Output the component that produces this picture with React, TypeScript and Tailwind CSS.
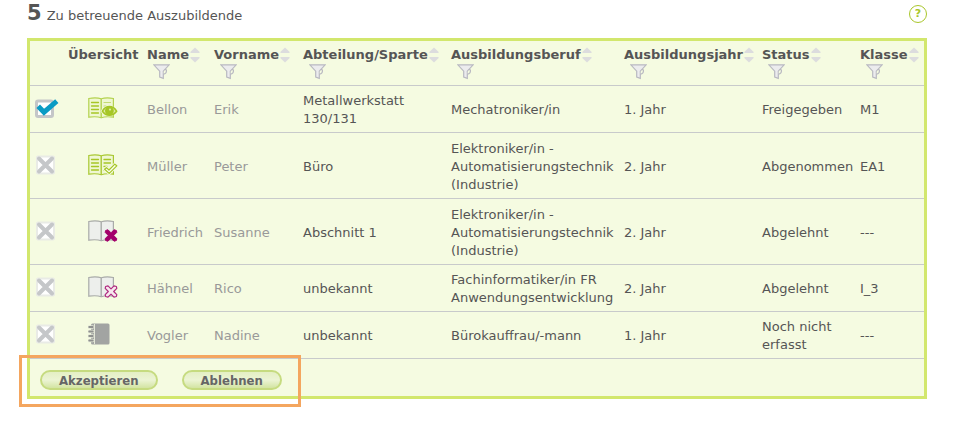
import { useState } from 'react';
import type { ReactNode } from 'react';
import clsx from 'clsx';

type Overview = 'released' | 'accepted' | 'rejected' | 'rejectedOpen' | 'notebook';

interface Trainee {
  id: number;
  overview: Overview;
  name: string;
  firstName: string;
  department: string;
  job: string;
  year: string;
  status: string;
  className: string;
  tall?: boolean;
}

const trainees: Trainee[] = [
  { id: 1, overview: 'released', name: 'Bellon', firstName: 'Erik', department: 'Metallwerkstatt 130/131', job: 'Mechatroniker/in', year: '1. Jahr', status: 'Freigegeben', className: 'M1' },
  { id: 2, overview: 'accepted', name: 'Müller', firstName: 'Peter', department: 'Büro', job: 'Elektroniker/in - Automatisierungstechnik (Industrie)', year: '2. Jahr', status: 'Abgenommen', className: 'EA1', tall: true },
  { id: 3, overview: 'rejected', name: 'Friedrich', firstName: 'Susanne', department: 'Abschnitt 1', job: 'Elektroniker/in - Automatisierungstechnik (Industrie)', year: '2. Jahr', status: 'Abgelehnt', className: '---', tall: true },
  { id: 4, overview: 'rejectedOpen', name: 'Hähnel', firstName: 'Rico', department: 'unbekannt', job: 'Fachinformatiker/in FR Anwendungsentwicklung', year: '2. Jahr', status: 'Abgelehnt', className: 'I_3' },
  { id: 5, overview: 'notebook', name: 'Vogler', firstName: 'Nadine', department: 'unbekannt', job: 'Bürokauffrau/-mann', year: '1. Jahr', status: 'Noch nicht erfasst', className: '---' },
];

const sortableColumns = ['Name', 'Vorname', 'Abteilung/Sparte', 'Ausbildungsberuf', 'Ausbildungsjahr', 'Status', 'Klasse'];

function SortIcon() {
  return (
    <svg width="10" height="16" viewBox="0 0 10 16" fill="#dcdcde" className="shrink-0" aria-hidden="true">
      <path d="M5 0.5 L9.7 5 Q9.8 6 9 6 H1 Q0.2 6 0.3 5 Z" />
      <path d="M5 15.5 L9.7 11 Q9.8 10 9 10 H1 Q0.2 10 0.3 11 Z" />
    </svg>
  );
}

function FilterIcon() {
  return (
    <svg width="17" height="16" viewBox="0 0 17 16" fill="none" stroke="#b9b9c1" aria-hidden="true">
      <path d="M0.8 0.8 H16.2 L10.3 7.2 V14.4 L6.7 13 V7.2 Z" fill="#ececee" strokeWidth="1.2" />
      <path d="M11 6.5 C12.4 4.6 13.8 5.8 13.4 7.4 C13.1 9.2 12 10.2 10.6 9.6" fill="#f5fbe1" strokeWidth="1.2" />
    </svg>
  );
}

function CheckedIcon() {
  return (
    <svg width="24" height="20" viewBox="0 0 24 20" fill="none" aria-hidden="true">
      <rect x="1.5" y="3" width="16" height="15.5" rx="1.5" fill="#fff" stroke="#c4c6c8" strokeWidth="3" />
      <path d="M3.2 8.2 L9 14.2 L21.8 3.2" stroke="#0a9bc4" strokeWidth="5" />
    </svg>
  );
}

function UncheckedIcon() {
  return (
    <svg width="24" height="20" viewBox="0 0 24 20" fill="none" aria-hidden="true">
      <rect x="2" y="1.5" width="17" height="17" rx="1" fill="#fff" stroke="#e9ebe6" strokeWidth="2" />
      <path d="M4 3.5 L17 16.5 M17 3.5 L4 16.5" stroke="#c5c7c9" strokeWidth="4" strokeLinecap="round" />
    </svg>
  );
}

function Book({ stroke, fill, children }: { stroke: string; fill: string; children: ReactNode }) {
  return (
    <svg width="30" height="22" viewBox="0 0 30 22" fill="none" aria-hidden="true">
      <path
        d="M0.8 1.5 C5 0.8 10 0.8 13.2 1.8 C16.4 0.8 21.4 0.8 25.4 1.5 V20.2 C21.4 19.6 16.4 19.6 13.2 20.8 C10 19.6 5 19.6 0.8 20.2 Z"
        fill={fill}
        stroke={stroke}
        strokeWidth="1.2"
      />
      <path d="M13.2 2 V20.6" stroke={stroke} strokeWidth="1.4" />
      {children}
    </svg>
  );
}

const CROSS = 'M17.6 10.5 L20 9.8 L23 12.8 L26 9.8 L28.4 10.5 L28.8 12.4 L25.7 15.5 L28.8 18.6 L28.4 20.5 L26 21.2 L23 18.2 L20 21.2 L17.6 20.5 L17.2 18.6 L20.3 15.5 L17.2 12.4 Z';

function OverviewIcon({ type }: { type: Overview }) {
  switch (type) {
    case 'released':
      return (
        <Book stroke="#b4d24f" fill="#eff7d2">
          <path d="M3.5 5.5 H10.5 M3.5 9 H10.5 M3.5 12.5 H10.5 M3.5 16 H10.5" stroke="#a6c626" strokeWidth="1.3" strokeLinecap="round" />
          <path d="M16 5.5 H22.5 M16 9 H18" stroke="#c4dc72" strokeWidth="1.2" strokeLinecap="round" />
          <path d="M12.5 14.2 C16.5 6.5 25.5 6.5 29.8 14.2 C25.5 21 16.5 21 12.5 14.2 Z" fill="#f5fbe1" />
          <path d="M14.4 14.2 C17.8 8 25 8 28.6 14.2 C25 19.4 17.8 19.4 14.4 14.2 Z" fill="#dcebA0" stroke="#a6c626" strokeWidth="1.6" />
          <circle cx="21.4" cy="13.8" r="4.4" fill="#a6c626" />
          <circle cx="22" cy="12.6" r="1.1" fill="#dcebA0" />
        </Book>
      );
    case 'accepted':
      return (
        <Book stroke="#a9c832" fill="#eff7d2">
          <path
            d="M3.5 5.5 H10.5 M3.5 9 H10.5 M3.5 12.5 H10.5 M3.5 16 H10.5 M16 5.5 H22.5 M16 9 H22.5 M16 12.5 H19 M16 16 H17"
            stroke="#a6c626"
            strokeWidth="1.3"
            strokeLinecap="round"
          />
          <path d="M16.6 15.2 L18.4 13.6 L21 16 L26.8 10.2 L28.8 11.8 L21.2 19.4 Z" fill="#fbfdf2" stroke="#f5fbe1" strokeWidth="3" strokeLinejoin="round" />
          <path d="M16.6 15.2 L18.4 13.6 L21 16 L26.8 10.2 L28.8 11.8 L21.2 19.4 Z" fill="#fbfdf2" stroke="#a6c626" strokeWidth="1.2" strokeLinejoin="round" />
        </Book>
      );
    case 'rejected':
      return (
        <Book stroke="#a9aba9" fill="#edefec">
          <path d={CROSS} fill="#a3006b" stroke="#a3006b" strokeWidth="1" strokeLinejoin="round" />
        </Book>
      );
    case 'rejectedOpen':
      return (
        <Book stroke="#a9aba9" fill="#edefec">
          <path d={CROSS} fill="#f8e8ee" stroke="#b02a80" strokeWidth="1.2" strokeLinejoin="round" />
        </Book>
      );
    default:
      return (
        <svg width="30" height="22" viewBox="0 0 30 22" fill="none" aria-hidden="true">
          <rect x="3" y="0.5" width="18.5" height="21" rx="1.5" fill="#a2a4a2" />
          <path d="M6.5 1 V21" stroke="#e4e8d8" strokeWidth="1" />
          <path d="M1.4 4 H4.6 M1.4 8.5 H4.6 M1.4 13 H4.6 M1.4 17.5 H4.6" stroke="#e4e8d8" strokeWidth="3.6" strokeLinecap="round" />
          <path d="M1.2 4 H4.8 M1.2 8.5 H4.8 M1.2 13 H4.8 M1.2 17.5 H4.8" stroke="#8f918f" strokeWidth="1.8" strokeLinecap="round" />
        </svg>
      );
  }
}

function PillButton({ children }: { children: ReactNode }) {
  return (
    <button
      type="button"
      className="flex h-5 items-center rounded-full border-2 border-[#c6db80] bg-linear-to-b from-[#e4efc4] via-[#ecf4d4] to-[#d3e4a2] px-[17px] pt-px font-['DejaVu_Sans_Condensed','DejaVu_Sans',sans-serif] text-[13px] leading-4 font-bold text-[#666]"
    >
      {children}
    </button>
  );
}

export default function App() {
  const [selected, setSelected] = useState<number[]>([1]);

  const toggle = (id: number) =>
    setSelected((ids) => (ids.includes(id) ? ids.filter((i) => i !== id) : [...ids, id]));

  return (
    <main className="bg-white pr-[31px] pb-6 pl-[27px] font-['DejaVu_Sans',sans-serif] text-[13px] leading-[18px] text-[#555]">
      <header className="flex h-[38px] items-start justify-between pt-[5px]">
        <h1 className="flex items-baseline gap-[5px]">
          <span className="text-[21px] leading-4 font-bold">5</span>
          <span>Zu betreuende Auszubildende</span>
        </h1>
        <button
          type="button"
          aria-label="Hilfe"
          className="flex size-[18px] items-center justify-center rounded-full border border-[#a9c62b] text-[11px] font-bold text-[#a9c62b]"
        >
          ?
        </button>
      </header>

      <div className="border-3 border-[#d2e76d] bg-[#f5fbe1]">
        <table className="w-full table-fixed border-separate border-spacing-0 text-left">
          <colgroup>
            <col className="w-[32px]" />
            <col className="w-[79px]" />
            <col className="w-[67px]" />
            <col className="w-[89px]" />
            <col className="w-[148px]" />
            <col className="w-[173px]" />
            <col className="w-[138px]" />
            <col className="w-[98px]" />
            <col className="w-[70px]" />
          </colgroup>
          <thead>
            <tr className="h-[45px] align-top [&>*]:border-b [&>*]:border-[#c8cacb] [&>*]:pt-[5px]">
              <td />
              <th scope="col" className="pl-[6px] whitespace-nowrap">Übersicht</th>
              {sortableColumns.map((label) => (
                <th key={label} scope="col" className="pl-[6px]">
                  <button type="button" className="flex items-center gap-px font-bold whitespace-nowrap">
                    {label}
                    <SortIcon />
                  </button>
                  <button type="button" aria-label={`${label} filtern`} className="ml-[6px] block">
                    <FilterIcon />
                  </button>
                </th>
              ))}
            </tr>
          </thead>
          <tbody>
            {trainees.map((t) => (
              <tr
                key={t.id}
                className={clsx(
                  'align-middle [&>td]:border-b [&>td]:border-[#c8cacb] [&>td]:pt-[6px] [&>td]:pb-1',
                  t.tall ? 'h-[66px]' : 'h-[47px]'
                )}
              >
                <td className="pl-[5px]">
                  <label className="relative mb-1 block w-6">
                    <input
                      type="checkbox"
                      aria-label={`${t.firstName} ${t.name} auswählen`}
                      checked={selected.includes(t.id)}
                      onChange={() => toggle(t.id)}
                      className="absolute inset-0 cursor-pointer appearance-none"
                    />
                    {selected.includes(t.id) ? <CheckedIcon /> : <UncheckedIcon />}
                  </label>
                </td>
                <td className="pl-[26px]">
                  <button type="button" aria-label={`Übersicht ${t.firstName} ${t.name}`} className="mb-1 block">
                    <OverviewIcon type={t.overview} />
                  </button>
                </td>
                <td className="pl-[6px] text-[#999]">{t.name}</td>
                <td className="pl-[6px] text-[#999]">{t.firstName}</td>
                <td className="pr-6 pl-[6px]">{t.department}</td>
                <td className="pl-[6px]">{t.job}</td>
                <td className="pl-[6px]">{t.year}</td>
                <td className="pl-[6px]">{t.status}</td>
                <td className="pl-[6px]">{t.className}</td>
              </tr>
            ))}
          </tbody>
        </table>

        <div className="flex pt-[11px] pb-[6px] pl-[10px]">
          <div className="relative flex gap-6">
            <PillButton>Akzeptieren</PillButton>
            <PillButton>Ablehnen</PillButton>
            {/* highlight frame around the two actions */}
            <div className="pointer-events-none absolute -top-[15px] -right-[19px] -bottom-[17px] -left-[21px] border-3 border-[#f4a65f]" />
          </div>
        </div>
      </div>
    </main>
  );
}
